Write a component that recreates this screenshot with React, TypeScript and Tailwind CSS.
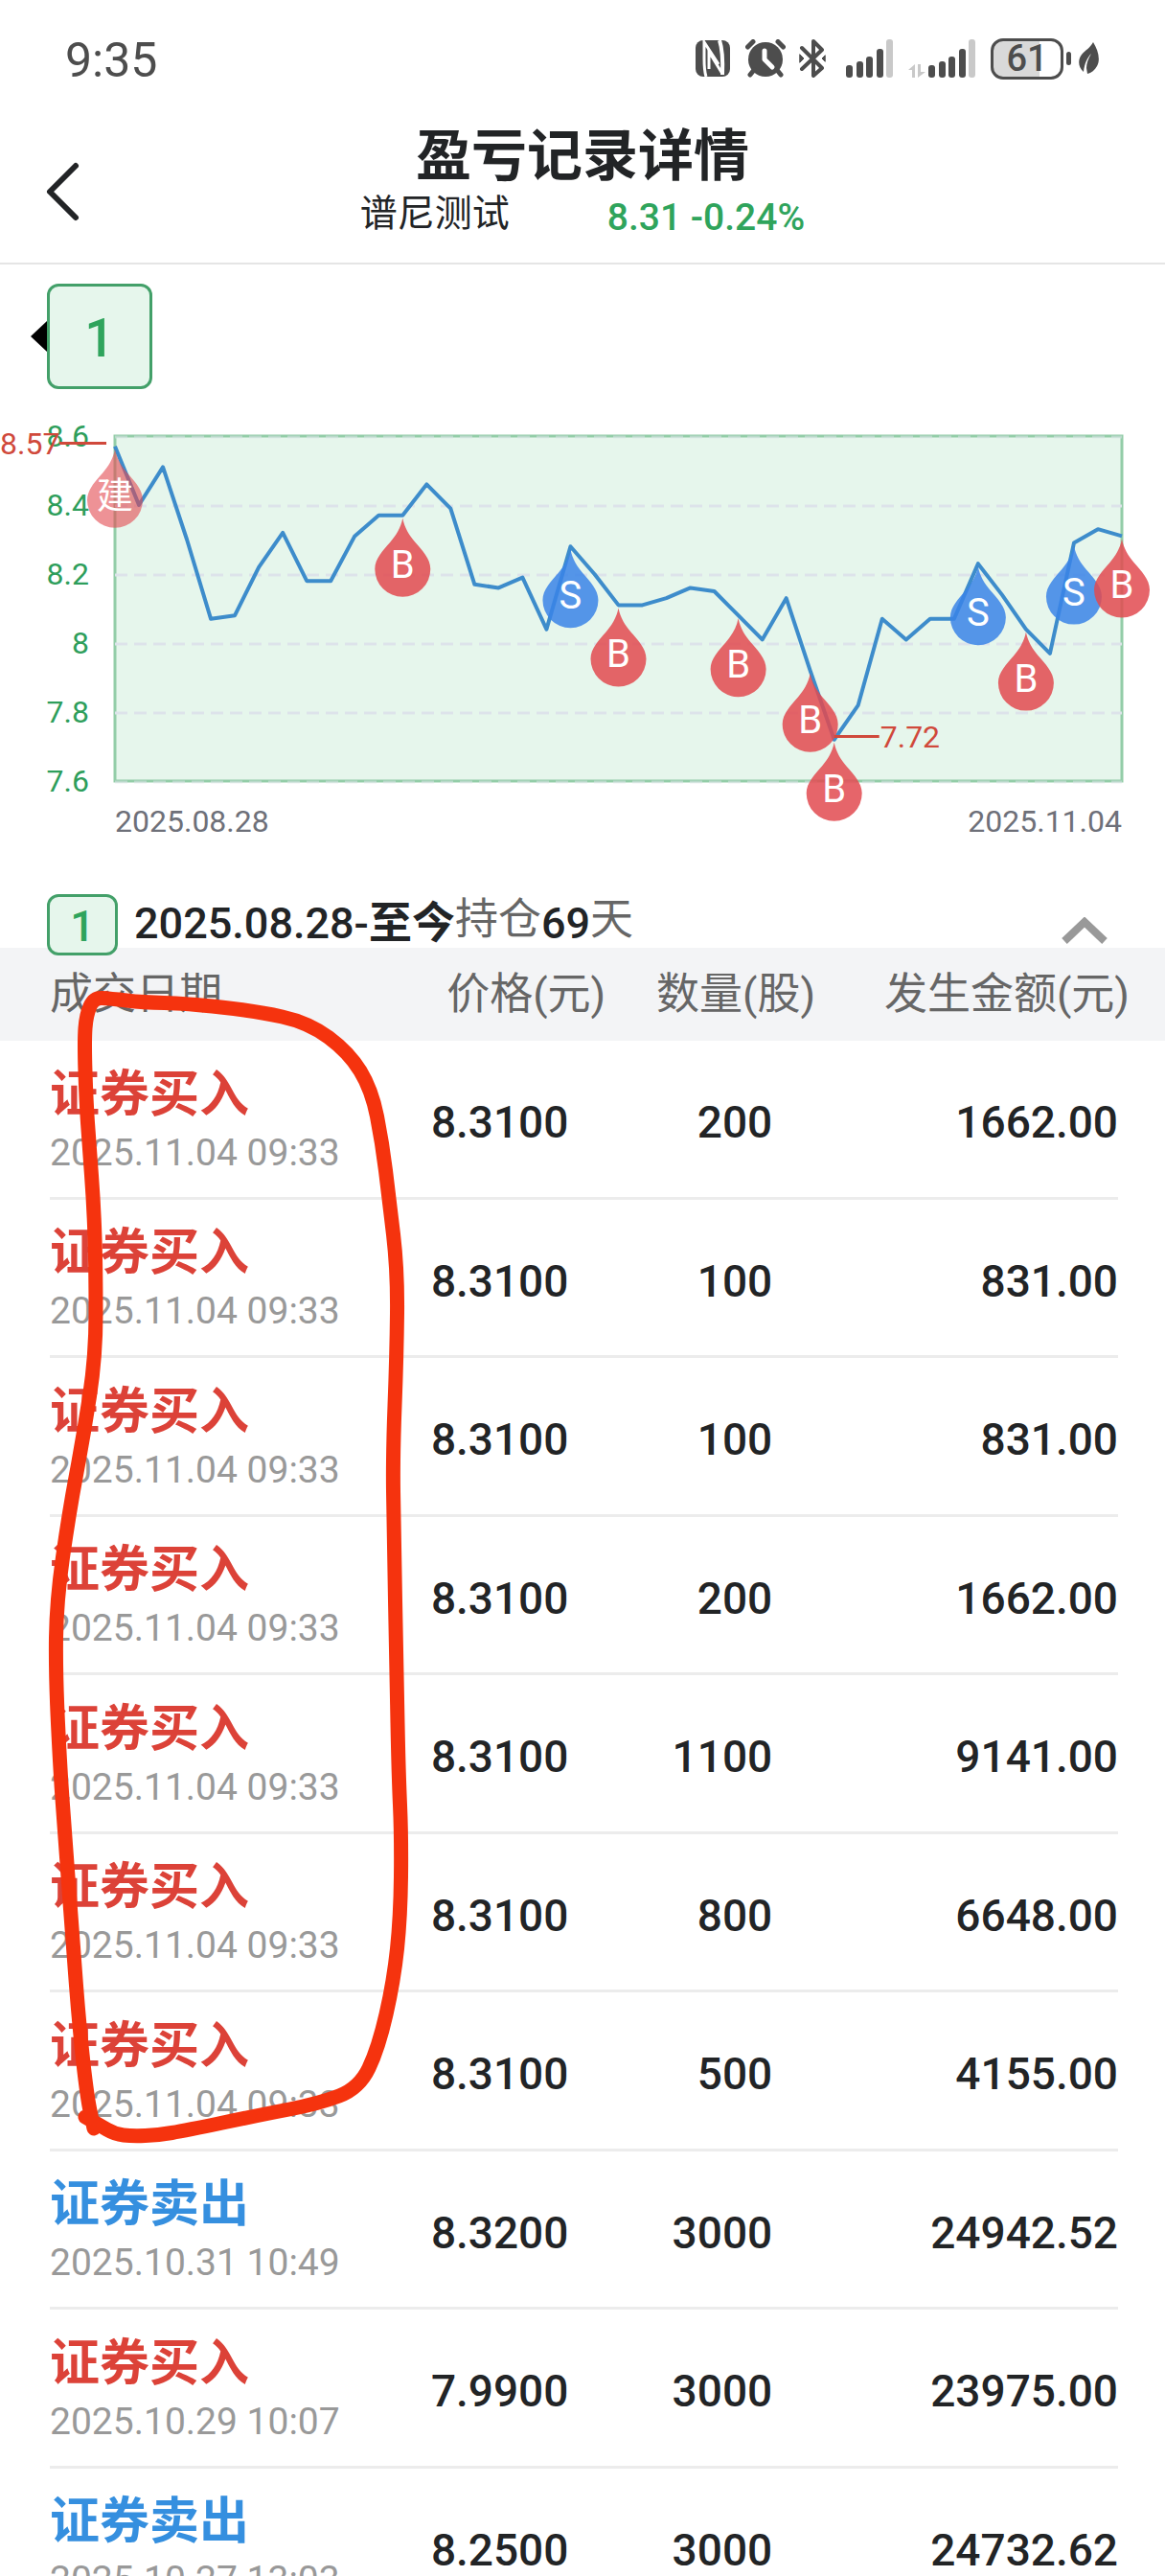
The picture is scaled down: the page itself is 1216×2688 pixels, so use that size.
import React from 'react';

type Side = 'buy' | 'sell';

interface Trade {
    side: Side;
    time: string;
    price: string;
    quantity: string;
    amount: string;
}

interface Marker {
    index: number;
    label: string;
    side: Side;
    faded?: boolean;
}

const trades: Trade[] = [
    { side: 'buy', time: '2025.11.04 09:33', price: '8.3100', quantity: '200', amount: '1662.00' },
    { side: 'buy', time: '2025.11.04 09:33', price: '8.3100', quantity: '100', amount: '831.00' },
    { side: 'buy', time: '2025.11.04 09:33', price: '8.3100', quantity: '100', amount: '831.00' },
    { side: 'buy', time: '2025.11.04 09:33', price: '8.3100', quantity: '200', amount: '1662.00' },
    { side: 'buy', time: '2025.11.04 09:33', price: '8.3100', quantity: '1100', amount: '9141.00' },
    { side: 'buy', time: '2025.11.04 09:33', price: '8.3100', quantity: '800', amount: '6648.00' },
    { side: 'buy', time: '2025.11.04 09:33', price: '8.3100', quantity: '500', amount: '4155.00' },
    { side: 'sell', time: '2025.10.31 10:49', price: '8.3200', quantity: '3000', amount: '24942.52' },
    { side: 'buy', time: '2025.10.29 10:07', price: '7.9900', quantity: '3000', amount: '23975.00' },
    { side: 'sell', time: '2025.10.27 13:03', price: '8.2500', quantity: '3000', amount: '24732.62' },
];

const closes = [
    8.57, 8.4, 8.51, 8.3, 8.07, 8.08, 8.22, 8.32, 8.18, 8.18, 8.31, 8.37, 8.37, 8.46, 8.39,
    8.17, 8.16, 8.19, 8.04, 8.28, 8.2, 8.11, 8.11, 8.13, 8.16, 8.15, 8.08, 8.01, 8.13, 7.92,
    7.72, 7.82, 8.07, 8.01, 8.07, 8.07, 8.23, 8.14, 8.04, 7.97, 8.29, 8.33, 8.31,
];

const markers: Marker[] = [
    { index: 0, label: '建', side: 'buy', faded: true },
    { index: 12, label: 'B', side: 'buy' },
    { index: 19, label: 'S', side: 'sell' },
    { index: 21, label: 'B', side: 'buy' },
    { index: 26, label: 'B', side: 'buy' },
    { index: 29, label: 'B', side: 'buy' },
    { index: 30, label: 'B', side: 'buy' },
    { index: 36, label: 'S', side: 'sell' },
    { index: 38, label: 'B', side: 'buy' },
    { index: 40, label: 'S', side: 'sell' },
    { index: 42, label: 'B', side: 'buy' },
];

const LEFT = 120;
const RIGHT = 1171;
const TOP = 35;
const BOTTOM = 395;

const xAt = (index: number) => LEFT + (index * (RIGHT - LEFT)) / (closes.length - 1);
const yAt = (price: number) => TOP + ((8.6 - price) / (8.6 - 7.6)) * (BOTTOM - TOP);

const SignalBars: React.FC = () => (
    <svg className="h-10 w-[50px]" viewBox="0 0 50 40" aria-hidden="true">
        <g fill="#4d4d4d">
            <rect x="0" y="27" width="7" height="13" rx="3" />
            <rect x="11" y="23" width="7" height="17" rx="3" />
            <rect x="21" y="18" width="7" height="22" rx="3" />
            <rect x="32" y="10" width="7" height="30" rx="3" />
        </g>
        <rect x="42" y="0" width="7" height="40" rx="3" fill="#c9c9c9" />
    </svg>
);

const StatusBar: React.FC = () => (
    <div className="flex h-[122px] shrink-0 items-center justify-between pl-[68px] pr-[69px] text-[#4d4d4d]">
        <span className="pt-1 text-[50px] leading-none">9:35</span>
        <div className="flex items-center">
            <svg className="h-10 w-9" viewBox="0 0 36 40" aria-hidden="true">
                <rect x="0" y="1" width="36" height="38" rx="8" fill="#4d4d4d" />
                <g fill="none" stroke="#fff">
                    <path d="M11 39 C9 33 9 28 9 20 V3 L24 26" strokeWidth="3" />
                    <path d="M25 1 C28 10 28.500 25 28 37" strokeWidth="4" />
                    <path d="M14 31 V13 L28 36" strokeWidth="3" />
                </g>
            </svg>
            <svg className="ml-4 h-10 w-[42px]" viewBox="0 0 42 40" fill="none" stroke="#4d4d4d" strokeLinecap="round" aria-hidden="true">
                <circle cx="21" cy="21" r="18" fill="#4d4d4d" stroke="none" />
                <path d="M2.500 8 L8 2.500 M34 2.500 L39.500 8 M9 32 L5 37 M33 32 L37 37" strokeWidth="5" />
                <path d="M20 12 V21 L28 29" stroke="#fff" strokeWidth="5" strokeLinejoin="round" />
            </svg>
            <svg className="ml-[14px] h-10 w-7" viewBox="0 0 28 40" fill="none" stroke="#4d4d4d" strokeWidth="4" strokeLinejoin="round" strokeLinecap="round" aria-hidden="true">
                <path d="M3 9 L24 30 L15 38 V2 L24 11 L3 31" />
                <path d="M1 16 L5 20 L1 24 Z M27 17 L24 20 L27 23 Z" fill="#4d4d4d" strokeWidth="1" />
            </svg>
            <div className="ml-[21px] flex">
                <SignalBars />
            </div>
            <div className="ml-[15px] flex items-end gap-[3px]">
                <svg className="h-[14px] w-[18px]" viewBox="0 0 18 14" fill="#c9c9c9" aria-hidden="true">
                    <path d="M0 6 L7 0 V14 H4 V6 Z M10 0 H13 V8 H18 L10 14 Z" />
                </svg>
                <SignalBars />
            </div>
            <div className="ml-[15px] flex items-center gap-[3px]">
                <div className="flex h-[43px] w-[76px] items-center justify-center rounded-[13px] border-[3px] border-[#4d4d4d] bg-linear-to-r from-[#d9d9d9] from-68% to-white to-68%">
                    <span className="text-[38px] font-medium leading-none">61</span>
                </div>
                <span className="h-[14px] w-[5px] rounded-full bg-[#4d4d4d]" />
            </div>
            <svg className="ml-2 h-[34px] w-[21px]" viewBox="0 0 21 34" aria-hidden="true">
                <path d="M15 0 C20 8 23 18 19 25 C17 29 13 32 9 33 L8 27 C8 22 10 17 13 12 C9 16 6 22 5 31 C-1 26 -1 18 3 13 C7 8 12 6 15 0 Z" fill="#4d4d4d" />
            </svg>
        </div>
    </div>
);

const PageHeader: React.FC = () => (
    <header className="grid h-[154px] shrink-0 grid-cols-[120px_1fr_120px] border-b-2 border-[#e5e5e5] text-[#222426]">
        <button type="button" aria-label="返回" className="flex items-center pl-[46px] pt-1">
            <svg className="h-16 w-10" viewBox="0 0 40 64" fill="none" stroke="currentColor" strokeWidth="6" strokeLinecap="round" strokeLinejoin="round">
                <path d="M33 5 L6 32 L33 59" />
            </svg>
        </button>
        <div className="flex flex-col items-center pt-2">
            <h1 className="text-[58px] font-bold leading-[66px]">盈亏记录详情</h1>
            <div className="flex items-center gap-[102px] leading-[46px]">
                <span className="text-[39px]">谱尼测试</span>
                <span className="pt-2 text-[39px] font-medium text-[#2fa45c]">8.31 -0.24%</span>
            </div>
        </div>
    </header>
);

const DropMarker: React.FC<{ marker: Marker }> = ({ marker }) => (
    <g transform={`translate(${xAt(marker.index)} ${yAt(closes[marker.index]) + 3})`}>
        <path
            d="M0 0 C2 10 7 18 13 25 C20 33 29 42 29 53 A29 29 0 0 1 -29 53 C-29 42 -20 33 -13 25 C-7 18 -2 10 0 0 Z"
            fill={marker.side === 'buy' ? '#e24a50' : '#3a84e8'}
            fillOpacity={marker.faded ? 0.6 : 0.85}
        />
        <text y={marker.faded ? 61 : 62} textAnchor="middle" fill="#fff" fontSize={marker.faded ? 38 : 40}>
            {marker.label}
        </text>
    </g>
);

const PriceChart: React.FC = () => (
    <svg className="mt-[14px] block w-full text-[32px]" viewBox="0 0 1216 470" role="img" aria-label="持仓期间股价走势">
        <rect x={LEFT} y={TOP} width={RIGHT - LEFT} height={BOTTOM - TOP} fill="#e6f6ec" stroke="#93cda8" strokeWidth="3" />
        {[8.6, 8.4, 8.2, 8, 7.8, 7.6].map(price => (
            <g key={price}>
                <line x1={LEFT} x2={RIGHT} y1={yAt(price) + 1} y2={yAt(price) + 1} stroke="#dde3ea" strokeWidth="3" strokeDasharray="13 7" strokeOpacity={price === 8.6 || price === 7.6 ? 0.5 : 1} />
                <text x="93" y={yAt(price) + 11} textAnchor="end" fill="#2e9e5b">{price}</text>
            </g>
        ))}
        <polyline points={closes.map((close, i) => `${xAt(i)},${yAt(close)}`).join(' ')} fill="none" stroke="#3d8ccb" strokeWidth="4" strokeLinejoin="round" />
        {markers.map(marker => <DropMarker key={marker.index} marker={marker} />)}

        <g fill="#d0493b">
            <text x="0" y="54">8.57</text>
            <rect x="62" y="41" width="49" height="3" />
            <rect x={xAt(30)} y="347" width="47" height="3" />
            <text x={xAt(30) + 48} y="360">7.72</text>
        </g>
        <g fill="#6e7079">
            <text x={LEFT} y="448">2025.08.28</text>
            <text x={RIGHT} y="448" textAnchor="end">2025.11.04</text>
        </g>
    </svg>
);

const HoldingSummary: React.FC = () => (
    <div className="relative z-10 mt-[43px] flex h-14 items-start pl-[49px] pr-[60px]">
        <span className="flex h-16 w-[74px] shrink-0 items-center justify-center rounded-xl border-[3px] border-[#43a069] bg-[#e6f6ec] pt-1 text-[45px] font-medium text-[#2fa45c]">1</span>
        <p className="ml-[17px] flex h-[62px] items-center text-[45px] font-medium text-[#222426]">
            <span>2025.08.28-</span>
            <span className="font-bold">至今</span>
            <span className="pb-2 font-normal text-[#666]">持仓</span>
            <span>69</span>
            <span className="pb-2 font-normal text-[#666]">天</span>
        </p>
        <button type="button" aria-label="收起" className="ml-auto mt-6">
            <svg className="h-7 w-12" viewBox="0 0 48 28" fill="none" stroke="#999" strokeWidth="8">
                <path d="M3 25 L24 5 L45 25" />
            </svg>
        </button>
    </div>
);

const TradeRow: React.FC<{ trade: Trade }> = ({ trade }) => {
    const cell = 'flex h-[166px] items-center border-b-[3px] border-[#ececec] pt-2 group-even:h-[165px]';
    return (
        <tr className="group text-[46px] font-medium text-[#222426]">
            <td className="p-0 pl-[52px]">
                <div className={cell}>
                    <div>
                        <div className={`text-[52px] font-bold leading-[62px] ${trade.side === 'buy' ? 'text-[#dc4238]' : 'text-[#358fdf]'}`}>
                            {trade.side === 'buy' ? '证券买入' : '证券卖出'}
                        </div>
                        <div className="text-[39px] font-normal leading-[58px] text-[#999]">{trade.time}</div>
                    </div>
                </div>
            </td>
            <td className="p-0"><div className={cell}>{trade.price}</div></td>
            <td className="p-0"><div className={`${cell} justify-end pr-[45px]`}>{trade.quantity}</div></td>
            <td className="p-0 pr-[49px]"><div className={`${cell} justify-end`}>{trade.amount}</div></td>
        </tr>
    );
};

const TradeTable: React.FC = () => (
    <table className="w-full table-fixed border-collapse">
        <thead>
            <tr className="h-[97px] bg-[#f3f4f6] text-[45px] text-[#666]">
                <th scope="col" className="w-[37%] p-0 pl-[52px] text-left font-normal">成交日期</th>
                <th scope="col" className="w-[15%] p-0 text-right font-normal">价格(元)</th>
                <th scope="col" className="w-[18%] p-0 text-right font-normal">数量(股)</th>
                <th scope="col" className="w-[30%] p-0 pr-[37px] text-right font-normal">发生金额(元)</th>
            </tr>
        </thead>
        <tbody>
            {trades.map((trade, i) => <TradeRow key={i} trade={trade} />)}
        </tbody>
    </table>
);

const strokePoints: [number, number][] = [
    [89, 1220], [103, 1228], [120, 1238], [138, 1240], [165, 1239], [194, 1234], [271, 1218], [333, 1206], [375, 1190],
    [395, 1148], [411, 1078], [418, 1011], [419, 928], [416, 861], [414, 758], [411, 605], [410, 529], [414, 426],
    [415, 337], [406, 261], [399, 204], [388, 148], [364, 109], [322, 78], [267, 66], [194, 58], [149, 57],
    [115, 53], [98, 52], [90, 70], [88, 98], [90, 161], [93, 204], [98, 271], [100, 337], [100, 426], [87, 510],
    [72, 590], [59, 682], [58, 758], [63, 861], [68, 928], [76, 1038], [83, 1128], [91, 1200], [98, 1232],
];

// joins the sampled points through their midpoints so the pen line stays smooth
const strokePath = strokePoints
    .map(([x, y], i) => {
        if (i === 0) return `M${x} ${y}`;
        const next = strokePoints[i + 1];
        return next ? `Q${x} ${y} ${(x + next[0]) / 2} ${(y + next[1]) / 2}` : `L${x} ${y}`;
    })
    .join(' ');

const PenStroke: React.FC = () => (
    <svg className="pointer-events-none absolute left-0 top-0 z-20 h-[1260px] w-[440px]" viewBox="0 0 440 1260" aria-hidden="true">
        <path d={strokePath} fill="none" stroke="#f5330e" strokeWidth="15" strokeLinecap="round" strokeLinejoin="round" />
    </svg>
);

const App: React.FC = () => (
    <div className="flex h-screen flex-col overflow-hidden bg-white font-[Roboto,'Noto_Sans_CJK_SC',sans-serif]">
        <StatusBar />
        <PageHeader />
        <main className="min-h-0 flex-1 overflow-hidden pt-5">
            <div className="flex items-center pl-8">
                <svg className="h-8 w-[17px]" viewBox="0 0 17 32" aria-hidden="true">
                    <path d="M17 0 V32 L0 16 Z" />
                </svg>
                <button type="button" className="flex h-[110px] w-[110px] items-center justify-center rounded-xl border-[3px] border-[#43a069] bg-[#e6f6ec] pt-1 text-[55px] font-medium text-[#2fa45c]">1</button>
            </div>
            <PriceChart />
            <HoldingSummary />
            <section className="relative">
                <TradeTable />
                <PenStroke />
            </section>
        </main>
    </div>
);

export default App;
